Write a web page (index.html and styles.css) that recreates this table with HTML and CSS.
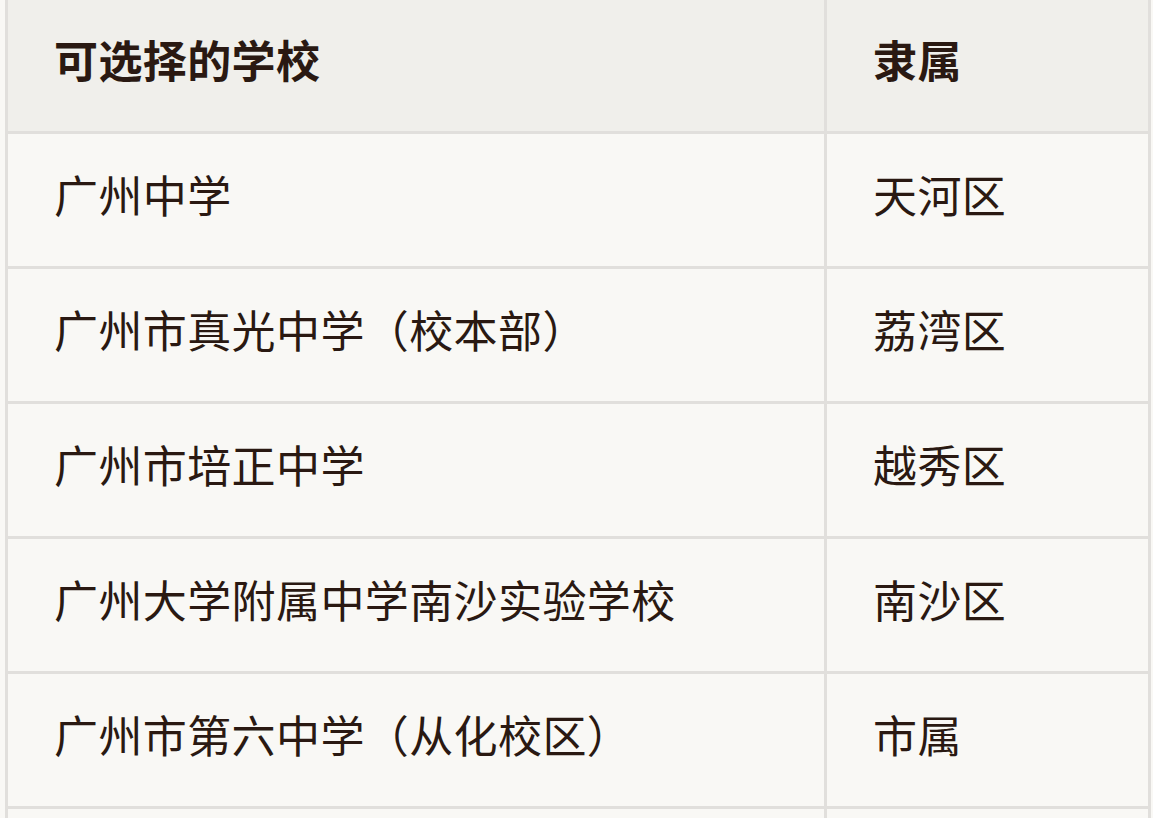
FILE: index.html
```html
<!DOCTYPE html>
<html lang="zh-CN">
<head>
<meta charset="utf-8">
<title>可选择的学校</title>
<link rel="stylesheet" href="styles.css">
</head>
<body>
<div class="table">
  <div class="cell head">可选择的学校</div>
  <div class="cell head">隶属</div>
  <div class="cell">广州中学</div>
  <div class="cell">天河区</div>
  <div class="cell">广州市真光中学（校本部）</div>
  <div class="cell">荔湾区</div>
  <div class="cell">广州市培正中学</div>
  <div class="cell">越秀区</div>
  <div class="cell">广州大学附属中学南沙实验学校</div>
  <div class="cell">南沙区</div>
  <div class="cell">广州市第六中学（从化校区）</div>
  <div class="cell">市属</div>
  <div class="cell">&nbsp;</div>
  <div class="cell">&nbsp;</div>
</div>
</body>
</html>
```
FILE: styles.css
```css
html, body {
  margin: 0;
  padding: 0;
  background: #f9f8f5;
  overflow: hidden;
}
body {
  font-family: "Noto Sans CJK SC", "Noto Sans", sans-serif;
  color: #2a1912;
}
.table {
  margin-left: 5px;
  width: 1146px;
  box-sizing: border-box;
  display: grid;
  grid-template-columns: 816px 321px;
  gap: 3px;
  padding: 0 3px 3px 3px;
  background: #e1dfdc;
}
.cell {
  background: #f9f8f5;
  font-size: 44px;
  line-height: 66px;
  padding: 27px 0 39px 46px;
  white-space: nowrap;
  letter-spacing: 0.4px;
}
.head {
  background: #f0efeb;
  font-weight: 700;
  padding-top: 26px;
  padding-bottom: 39px;
}
```
